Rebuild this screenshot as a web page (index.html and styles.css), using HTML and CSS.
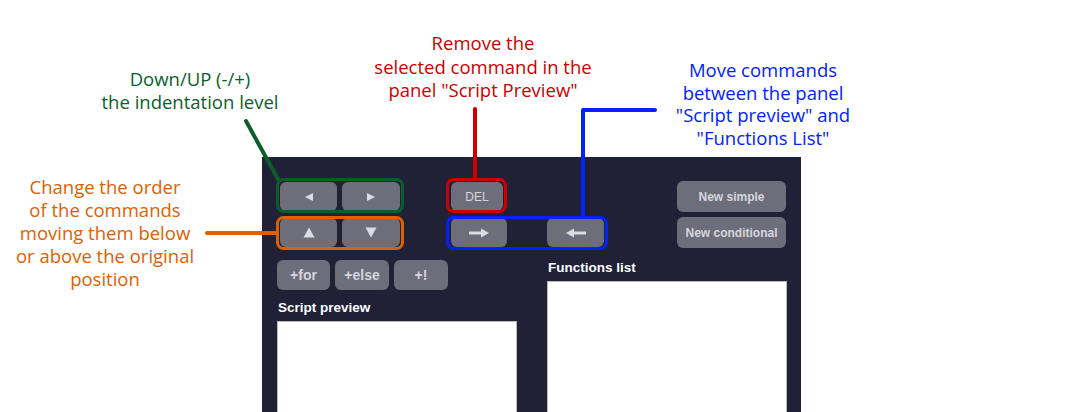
FILE: index.html
```html
<!DOCTYPE html>
<html lang="en">
<head>
<meta charset="utf-8">
<title>Script editor controls</title>
<link rel="stylesheet" href="styles.css">
</head>
<body>
<div class="stage">
  <div class="panel">
    <div class="controls">
      <button class="btn c1 r1" aria-label="Indent down"><svg class="ico" width="10" height="10" viewBox="0 0 10 10"><polygon points="1,5 9,1 9,9"/></svg></button>
      <button class="btn c2 r1" aria-label="Indent up"><svg class="ico" width="10" height="10" viewBox="0 0 10 10"><polygon points="9,5 1,1 1,9"/></svg></button>
      <button class="btn c3 r1 del">DEL</button>
      <button class="btn c5 r1 big">New simple</button>
      <button class="btn c1 r2" aria-label="Move up"><svg class="ico" width="12" height="11" viewBox="0 0 12 11"><polygon points="6,0.5 11.5,10.5 0.5,10.5"/></svg></button>
      <button class="btn c2 r2" aria-label="Move down"><svg class="ico" width="12" height="11" viewBox="0 0 12 11"><polygon points="0.5,0.5 11.5,0.5 6,10.5"/></svg></button>
      <button class="btn c3 r2" aria-label="To functions list"><svg class="arrow" width="22" height="12" viewBox="0 0 22 12"><path d="M1 6H15"/><polygon points="13,1.5 21,6 13,10.5"/></svg></button>
      <button class="btn c4 r2" aria-label="To script preview"><svg class="arrow" width="22" height="12" viewBox="0 0 22 12"><path d="M7 6H21"/><polygon points="9,1.5 1,6 9,10.5"/></svg></button>
      <button class="btn c5 r2 big">New conditional</button>
    </div>
    <div class="lower">
      <div class="col">
        <div class="adds">
          <button class="btn add">+for</button>
          <button class="btn add">+else</button>
          <button class="btn add">+!</button>
        </div>
        <h3 class="label script-label">Script preview</h3>
        <div class="box"></div>
      </div>
      <div class="col">
        <h3 class="label">Functions list</h3>
        <div class="box"></div>
      </div>
    </div>
  </div>

  <svg class="marks" width="1065" height="412" viewBox="0 0 1065 412">
    <line class="g" x1="246" y1="121" x2="279" y2="181"/>
    <rect class="g" x="277.5" y="179.5" width="125" height="32" rx="6"/>
    <line class="o" x1="207" y1="233" x2="277" y2="233"/>
    <rect class="o" x="277.5" y="217.5" width="125" height="31" rx="6"/>
    <line class="r" x1="475" y1="109" x2="475" y2="179"/>
    <rect class="r" x="447.5" y="179.5" width="58" height="32" rx="6"/>
    <polyline class="b" points="655,110 583,110 583,217"/>
    <rect class="b" x="447.5" y="217.5" width="159" height="31" rx="6"/>
  </svg>

  <p class="note note-green">Down/UP (-/+)<br>the indentation level</p>
  <p class="note note-red">Remove the<br>selected command in the<br>panel "Script Preview"</p>
  <p class="note note-blue">Move commands<br>between the panel<br>"Script preview" and<br>"Functions List"</p>
  <p class="note note-orange">Change the order<br>of the commands<br>moving them below<br>or above the original<br>position</p>
</div>
</body>
</html>
```

FILE: styles.css
```css
* { box-sizing: border-box; }

html, body {
  margin: 0;
  padding: 0;
  background: #ffffff;
}

.stage {
  position: relative;
  width: 1065px;
  height: 412px;
  overflow: hidden;
  padding: 157px 0 0 262px;
}

.panel {
  width: 539px;
  height: 300px;
  background: #202036;
  padding: 24px 14px 0 15px;
}

.controls {
  display: grid;
  grid-template-columns: 57px 5px 58px 51px 56px 40px 57px 73px 109px;
  grid-template-rows: 31px 31px;
  row-gap: 5px;
  margin-left: 3px;
  align-items: center;
}

.btn {
  border: 0;
  margin: 0;
  padding: 0;
  background: #6e6d7a;
  color: #d6d6de;
  border-radius: 6px;
  font-family: "Liberation Sans", Arial, sans-serif;
  font-size: 12px;
  display: flex;
  align-items: center;
  justify-content: center;
  height: 29px;
}

.c1 { grid-column: 1; }
.c2 { grid-column: 3; }
.c3 { grid-column: 5; }
.c4 { grid-column: 7; }
.c5 { grid-column: 9; }
.r1 { grid-row: 1; }
.r2 { grid-row: 2; }

.del { width: 52px; }
.big {
  height: 31px;
  font-weight: bold;
}

.ico { fill: #dcdce2; }
.arrow path { stroke: #dcdce2; stroke-width: 3; fill: none; }
.arrow polygon { fill: #dcdce2; }

.lower {
  display: grid;
  grid-template-columns: 240px 240px;
  column-gap: 30px;
  margin-top: 12px;
}

.col {
  display: flex;
  flex-direction: column;
}

.adds {
  display: flex;
  gap: 5px;
  height: 30px;
}

.add {
  width: 54px;
  height: 30px;
  font-size: 14px;
  font-weight: bold;
}
.add:first-child { width: 53px; }

.label {
  margin: 0 0 5px 1px;
  font-family: "Liberation Sans", Arial, sans-serif;
  font-weight: bold;
  font-size: 13.5px;
  line-height: 16px;
  color: #ffffff;
}

.script-label { margin-top: 10px; }

.box {
  background: #ffffff;
  border: 1px solid #b8b8c0;
  height: 200px;
}

.marks {
  position: absolute;
  left: 0;
  top: 0;
  pointer-events: none;
}
.marks line, .marks polyline, .marks rect {
  fill: none;
  stroke-linecap: round;
  stroke-linejoin: round;
}
.marks line, .marks polyline { stroke-width: 4; }
.marks rect { stroke-width: 3; }
.marks .g { stroke: #0b5e2a; }
.marks .o { stroke: #dd6100; }
.marks .r { stroke: #cc0000; }
.marks .b { stroke: #0022ff; }

.note {
  position: absolute;
  margin: 0;
  text-align: center;
  font-family: "Open Sans", "Lato", sans-serif;
  font-size: 18.5px;
  white-space: nowrap;
  transform: translateX(-50%);
}

.note-green { left: 190px; top: 67px; line-height: 23px; color: #0b5e2a; }
.note-red { left: 483px; top: 31px; line-height: 23.5px; color: #cc0000; }
.note-blue { left: 763px; top: 59px; line-height: 22.7px; color: #0022ff; }
.note-orange { left: 105px; top: 175px; line-height: 23px; color: #dd6100; }
```
